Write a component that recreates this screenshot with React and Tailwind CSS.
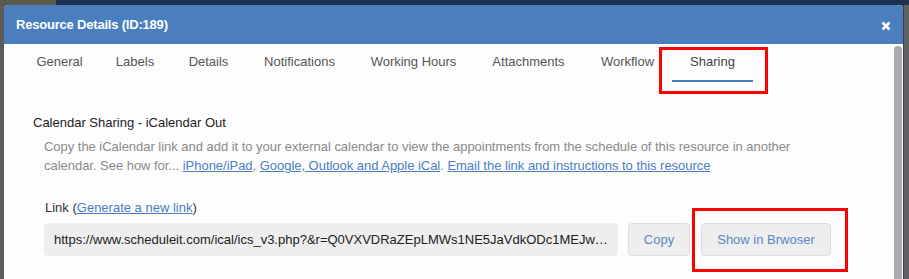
import React from "react";

const tabs = [
  ["General", "w-[79px]"],
  ["Labels", "w-[72px]"],
  ["Details", "w-[75px]"],
  ["Notifications", "w-[107px]"],
  ["Working Hours", "w-[121px]"],
  ["Attachments", "w-[109px]"],
  ["Workflow", "w-[89px]"],
  ["Sharing", "w-[81px]"],
];

export default function App() {
  return (
    <div
      className="relative w-[909px] h-[279px] overflow-hidden bg-[#5f6062] text-[13px]"
      style={{ fontFamily: '"Liberation Sans", Arial, sans-serif' }}
    >
      <div className="flex h-[5px]">
        <div className="w-[56px] bg-[#5a5a4c]" />
        <div className="flex-1 bg-[#1f3152]" />
      </div>
      <div className="flex h-[274px]">
        <div className="w-[4px] bg-[#5b5b5b]" />
        <div className="w-[899px] flex flex-col bg-[#fdfdfd] rounded-t-[5px] overflow-hidden">
          <div className="h-[39px] shrink-0 bg-[#4a7ebf] flex items-center justify-between pl-[12px] pr-[12px]">
            <span className="text-white font-bold text-[13px] tracking-[-0.2px]">Resource Details (ID:189)</span>
            <svg width="10" height="10" viewBox="0 0 10 10" className="mt-[2px]">
              <path d="M1.5 1.5 L8.5 8.5 M8.5 1.5 L1.5 8.5" stroke="white" strokeWidth="2.6" strokeLinecap="butt" />
            </svg>
          </div>
          <div className="flex flex-1 min-h-0">
            <div className="flex-1 flex flex-col">
              <div className="flex pl-[16px] h-[38px]">
                {tabs.map(([t, w]) => (
                  <div key={t} className={`${w} flex flex-col items-center`}>
                    <div className={`h-[36px] flex items-center ${t === "Sharing" ? "text-[#444]" : "text-[#555]"}`}>{t}</div>
                    {t === "Sharing" && <div className="w-full h-[2px] bg-[#4a7ebf]" />}
                  </div>
                ))}
              </div>
              <div className="pl-[29px] pt-[33px] text-[#222] leading-[16px]">Calendar Sharing - iCalendar Out</div>
              <div className="pl-[40px] pt-[6px] text-[#8a8a8a] leading-[19px] tracking-[-0.03px]">
                Copy the iCalendar link and add it to your external calendar to view the appointments from the schedule of this resource in another
                <br />
                calendar. See how for...{" "}
                <a className="text-[#4a7ebf] underline">iPhone/iPad</a>,{" "}
                <a className="text-[#4a7ebf] underline">Google, Outlook and Apple iCal</a>.{" "}
                <a className="text-[#4a7ebf] underline">Email the link and instructions to this resource</a>
              </div>
              <div className="pl-[41px] pt-[25px] text-[#333] leading-[16px]">
                Link (<a className="text-[#4a7ebf] underline">Generate a new link</a>)
              </div>
              <div className="flex pl-[40px] pt-[7px] gap-[10px]">
                <div className="w-[574px] h-[33px] bg-[#eeeeee] rounded-[4px] flex items-center px-[10px] text-[#222]">
                  <span className="overflow-hidden whitespace-nowrap text-ellipsis">
                    https://www.scheduleit.com/ical/ics_v3.php?&amp;r=Q0VXVDRaZEpLMWs1NE5JaVdkODc1MEJwOTk3NjU0MzIx
                  </span>
                </div>
                <div className="w-[62px] h-[33px] bg-[#eeeeee] border border-[#dddddd] rounded-[4px] flex items-center justify-center text-[#5b87c5]">Copy</div>
                <div className="w-[130px] h-[33px] ml-[1px] bg-[#eeeeee] border border-[#dddddd] rounded-[4px] flex items-center justify-center text-[#5b87c5]">Show in Brwoser</div>
              </div>
            </div>
            <div className="w-[9px] shrink-0 pt-[2px] pr-[1px]">
              <div className="w-[8px] h-full bg-[#ababab] rounded-t-[4px]" />
            </div>
          </div>
        </div>
        <div className="w-[6px] flex">
          <div className="w-[1px] bg-[#3a3f45]" />
          <div className="flex-1 bg-[#5f6368]" />
        </div>
      </div>
      <div className="absolute left-[659px] top-[47px] w-[109px] h-[47px] border-[3px] border-[#ff0000]" />
      <div className="absolute left-[692px] top-[208px] w-[156px] h-[64px] border-[3px] border-[#ff0000]" />
    </div>
  );
}
